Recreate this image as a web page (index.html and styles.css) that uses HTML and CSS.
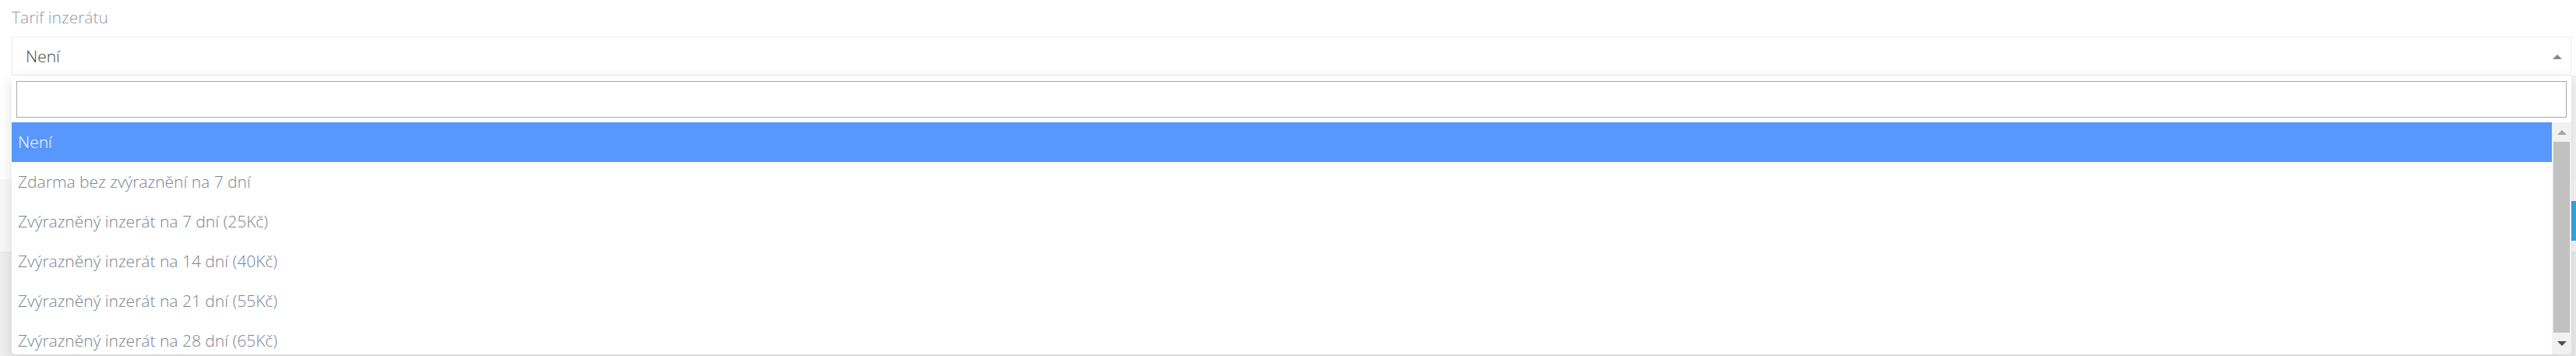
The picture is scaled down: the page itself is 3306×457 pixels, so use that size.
FILE: index.html
```html
<!DOCTYPE html>
<html lang="cs">
<head>
  <meta charset="UTF-8">
  <meta name="viewport" content="width=device-width, initial-scale=1.0">
  <title>Tarif inzerátu</title>
  <link rel="stylesheet" href="styles.css">
</head>
<body>
  <div class="form">
    <label class="field-label">Tarif inzerátu</label>

    <div class="select-wrap">
      <div class="select">
        <span class="select-value">Není</span>
        <span class="select-arrow"></span>
      </div>

      <!-- Open dropdown -->
      <div class="dropdown">
        <div class="search">
          <input type="text" class="search-input">
        </div>
        <div class="results">
          <ul class="options">
            <li class="option active">Není</li>
            <li class="option">Zdarma bez zvýraznění na 7 dní</li>
            <li class="option">Zvýrazněný inzerát na 7 dní (25Kč)</li>
            <li class="option">Zvýrazněný inzerát na 14 dní (40Kč)</li>
            <li class="option">Zvýrazněný inzerát na 21 dní (55Kč)</li>
            <li class="option">Zvýrazněný inzerát na 28 dní (65Kč)</li>
          </ul>
          <div class="scrollbar">
            <span class="sb-btn"><span class="sb-up"></span></span>
            <span class="sb-thumb"></span>
            <span class="sb-btn sb-btn-bottom"><span class="sb-down"></span></span>
          </div>
        </div>
      </div>
    </div>
  </div>

  <!-- Page content behind the dropdown -->
  <div class="backdrop">
    <div class="band band-top"><div class="edge edge-top"></div></div>
    <div class="band band-mid">
      <div class="edge edge-mid">
        <span class="edge-tab"></span>
      </div>
    </div>
    <div class="band band-low"><div class="edge edge-low"></div></div>
  </div>
</body>
</html>
```

FILE: styles.css
```css
/* General styles */
body {
  margin: 0;
  font-family: "Open Sans", "Liberation Sans", sans-serif;
  background-color: #ffffff;
  overflow: hidden;
}

/* Form area */
.form {
  padding: 0 6px 0 15px;
  position: relative;
  z-index: 2;
}

.field-label {
  display: block;
  font-size: 21px;
  font-weight: 300;
  line-height: 28px;
  padding-top: 8px;
  margin-bottom: 11px;
  color: #8d9ba8;
}

/* Closed select */
.select-wrap {
  position: relative;
}

.select {
  box-sizing: border-box;
  height: 50px;
  border: 1px solid #ececec;
  display: flex;
  align-items: center;
  justify-content: space-between;
  padding: 0 11px 0 17px;
}

.select-value {
  font-size: 21px;
  font-weight: 300;
  color: #484848;
}

.select-arrow {
  width: 0;
  height: 0;
  border-left: 6px solid transparent;
  border-right: 6px solid transparent;
  border-bottom: 6px solid #888;
  margin-top: 2px;
}

/* Dropdown */
.dropdown {
  position: absolute;
  top: 100%;
  left: 0;
  right: 0;
  background-color: #fff;
  border-radius: 0 0 5px 5px;
  box-shadow: 0 6px 18px rgba(0, 0, 0, 0.12);
  overflow: hidden;
}

.search {
  padding: 7px 6px 6px 6px;
}

.search-input {
  display: block;
  box-sizing: border-box;
  width: 100%;
  height: 47px;
  margin: 0;
  border: 1px solid #aaa;
  border-radius: 0;
  outline: none;
}

.results {
  display: flex;
  height: 298px;
  overflow: hidden;
}

.options {
  flex: 1;
  list-style: none;
  margin: 0;
  padding: 0;
}

.option {
  height: 51px;
  line-height: 51px;
  padding-left: 8px;
  font-size: 21px;
  font-weight: 300;
  color: #7a8591;
  white-space: nowrap;
}

.option.active {
  background-color: #5897fb;
  color: #fff;
}

/* Fake scrollbar */
.scrollbar {
  width: 25px;
  background-color: #f1f1f1;
  display: flex;
  flex-direction: column;
  align-items: center;
}

.sb-btn {
  height: 25px;
  display: flex;
  align-items: center;
  justify-content: center;
}

.sb-btn-bottom {
  height: 28px;
}

.sb-up {
  width: 0;
  height: 0;
  border-left: 6px solid transparent;
  border-right: 6px solid transparent;
  border-bottom: 6px solid #a3a3a3;
}

.sb-down {
  width: 0;
  height: 0;
  border-left: 6px solid transparent;
  border-right: 6px solid transparent;
  border-top: 6px solid #505050;
}

.sb-thumb {
  width: 21px;
  height: 245px;
  background-color: #c1c1c1;
}

/* Backdrop (content under dropdown) */
.backdrop {
  position: relative;
  z-index: 1;
  display: flex;
  flex-direction: column;
}

.band {
  display: flex;
  justify-content: flex-end;
}

.band-top {
  height: 133px;
  background-color: #fff;
}

.band-mid {
  height: 93px;
  background-color: #f8f8f8;
}

.band-low {
  height: 140px;
  background-color: #eeeeee;
}

.edge {
  width: 6px;
}

.edge-top {
  background-color: #f3f3f3;
}

.edge-mid {
  background-color: #f6f6f6;
  padding-top: 28px;
}

.edge-tab {
  display: block;
  height: 51px;
  background-color: #35a8e1;
}

.edge-low {
  background-color: #ebebeb;
}
```
